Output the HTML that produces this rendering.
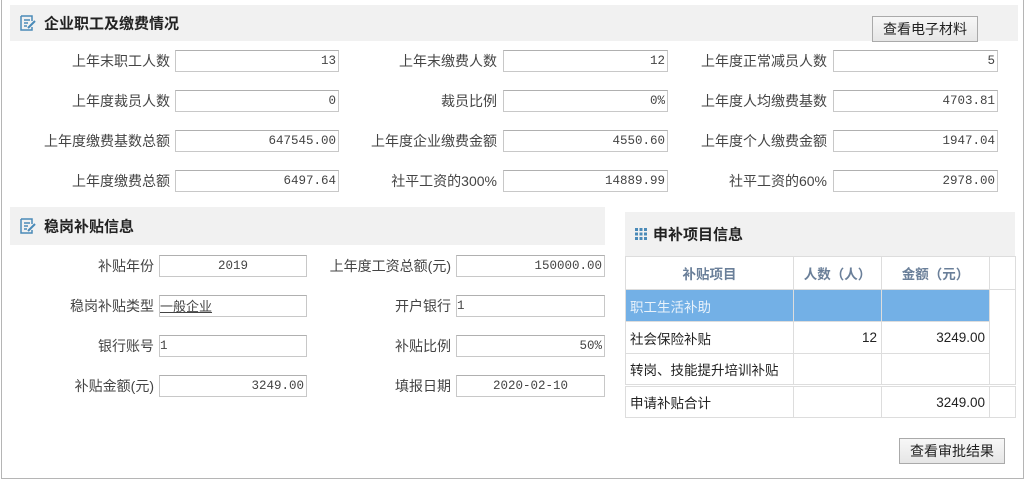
<!DOCTYPE html>
<html><head><meta charset="utf-8"><style>
*{box-sizing:border-box;margin:0;padding:0}
body{width:1026px;height:481px;background:#fff;position:relative;overflow:hidden;font-family:"Liberation Sans","Noto Sans CJK SC",sans-serif;color:#333}
.frame{position:absolute;left:1px;top:-2px;width:1023px;height:481px;border:1px solid #b5b5b5;}
.hd{position:absolute;background:#f1f1f1;font-weight:bold;font-size:15px;color:#222}
.hd span{position:absolute;left:34px;top:50%;transform:translateY(-50%)}
.ic{position:absolute;left:9px;top:50%;margin-top:-9px}
.lb{position:absolute;font-size:14px;color:#444;text-align:right;width:160px;line-height:22px}
.in{position:absolute;height:22px;border:1px solid #c8c8c8;border-top-color:#b0b0b0;background:#fff;font-family:"Liberation Mono","Noto Sans CJK SC",monospace;font-size:12.5px;line-height:20px;padding:0 2px;color:#444}
.r{text-align:right}.c{text-align:center}
.btn{position:absolute;border:1px solid #aaa;background:linear-gradient(#f7f7f7,#e6e6e6);font-size:14px;color:#222;text-align:center;line-height:24px}
table{position:absolute;left:625px;top:256px;border-collapse:collapse;font-size:13.5px}
td{border:1px solid #ddd;height:32px;padding:0 4px;color:#222}
th{border:1px solid #ddd;height:33px;color:#6a7f99;font-weight:bold;font-size:13.5px}
</style></head><body>
<div class="frame"></div>
<div class="hd" style="left:10px;top:5px;width:1008px;height:36px">
<svg class="ic" width="18" height="18" viewBox="0 0 18 18"><path d="M2 2h11v5M2 2v14h11v-3M5 6h6M5 9h4M5 12h3" fill="none" stroke="#4a8ab8" stroke-width="1.5"/><path d="M9 14l7-7" stroke="#4a8ab8" stroke-width="2"/></svg>
<span>企业职工及缴费情况</span></div>
<div class="btn" style="left:872px;top:16px;width:106px;height:26px">查看电子材料</div>

<div class="lb" style="left:10px;top:50px">上年末职工人数</div><div class="in r" style="left:175px;top:50px;width:164px">13</div>
<div class="lb" style="left:337px;top:50px">上年末缴费人数</div><div class="in r" style="left:503px;top:50px;width:165px">12</div>
<div class="lb" style="left:667px;top:50px">上年度正常减员人数</div><div class="in r" style="left:833px;top:50px;width:165px">5</div>

<div class="lb" style="left:10px;top:90px">上年度裁员人数</div><div class="in r" style="left:175px;top:90px;width:164px">0</div>
<div class="lb" style="left:337px;top:90px">裁员比例</div><div class="in r" style="left:503px;top:90px;width:165px">0%</div>
<div class="lb" style="left:667px;top:90px">上年度人均缴费基数</div><div class="in r" style="left:833px;top:90px;width:165px">4703.81</div>

<div class="lb" style="left:10px;top:130px">上年度缴费基数总额</div><div class="in r" style="left:175px;top:130px;width:164px">647545.00</div>
<div class="lb" style="left:337px;top:130px">上年度企业缴费金额</div><div class="in r" style="left:503px;top:130px;width:165px">4550.60</div>
<div class="lb" style="left:667px;top:130px">上年度个人缴费金额</div><div class="in r" style="left:833px;top:130px;width:165px">1947.04</div>

<div class="lb" style="left:10px;top:170px">上年度缴费总额</div><div class="in r" style="left:175px;top:170px;width:164px">6497.64</div>
<div class="lb" style="left:337px;top:170px">社平工资的300%</div><div class="in r" style="left:503px;top:170px;width:165px">14889.99</div>
<div class="lb" style="left:667px;top:170px">社平工资的60%</div><div class="in r" style="left:833px;top:170px;width:165px">2978.00</div>

<div class="hd" style="left:10px;top:207px;width:595px;height:38px">
<svg class="ic" width="18" height="18" viewBox="0 0 18 18"><path d="M2 2h11v5M2 2v14h11v-3M5 6h6M5 9h4M5 12h3" fill="none" stroke="#4a8ab8" stroke-width="1.5"/><path d="M9 14l7-7" stroke="#4a8ab8" stroke-width="2"/></svg>
<span>稳岗补贴信息</span></div>

<div class="lb" style="left:-6px;top:255px">补贴年份</div><div class="in c" style="left:159px;top:255px;width:148px">2019</div>
<div class="lb" style="left:291px;top:255px">上年度工资总额(元)</div><div class="in r" style="left:456px;top:255px;width:149px">150000.00</div>
<div class="lb" style="left:-6px;top:295px">稳岗补贴类型</div><div class="in" style="left:159px;top:295px;width:148px;font-family:'Noto Sans CJK SC',sans-serif;font-size:13px;padding:0"><u>一般企业</u></div>
<div class="lb" style="left:291px;top:295px">开户银行</div><div class="in" style="left:456px;top:295px;width:149px;padding:0">1</div>
<div class="lb" style="left:-6px;top:335px">银行账号</div><div class="in" style="left:159px;top:335px;width:148px;padding:0">1</div>
<div class="lb" style="left:291px;top:335px">补贴比例</div><div class="in r" style="left:456px;top:335px;width:149px">50%</div>
<div class="lb" style="left:-6px;top:375px">补贴金额(元)</div><div class="in r" style="left:159px;top:375px;width:148px">3249.00</div>
<div class="lb" style="left:291px;top:375px">填报日期</div><div class="in c" style="left:456px;top:375px;width:149px">2020-02-10</div>

<div class="hd" style="left:625px;top:212px;width:390px;height:44px">
<svg class="ic" width="14" height="14" viewBox="0 0 14 14" style="margin-top:-7px"><g fill="#4a8ab8"><rect x="1" y="1" width="3" height="3"/><rect x="5.5" y="1" width="3" height="3"/><rect x="10" y="1" width="3" height="3"/><rect x="1" y="5.5" width="3" height="3"/><rect x="5.5" y="5.5" width="3" height="3"/><rect x="10" y="5.5" width="3" height="3"/><rect x="1" y="10" width="3" height="3"/><rect x="5.5" y="10" width="3" height="3"/><rect x="10" y="10" width="3" height="3"/></g></svg>
<span style="left:28px">申补项目信息</span></div>
<table>
<tr><th style="width:168px">补贴项目</th><th style="width:88px">人数（人）</th><th style="width:108px">金额（元）</th><th style="width:26px"></th></tr>
<tr style="background:#73b0e6"><td style="color:#e8f2fb">职工生活补助</td><td></td><td></td><td style="background:#fff;border-top:none;border-bottom:none"></td></tr>
<tr><td>社会保险补贴</td><td class="r">12</td><td class="r">3249.00</td><td style="border-top:none;border-bottom:none"></td></tr>
<tr><td>转岗、技能提升培训补贴</td><td></td><td></td><td style="border-top:none"></td></tr>
<tr><td style="border-top:3px double #ddd">申请补贴合计</td><td style="border-top:3px double #ddd"></td><td class="r" style="border-top:3px double #ddd">3249.00</td><td style="border-top:3px double #ddd"></td></tr>
</table>
<div class="btn" style="left:899px;top:438px;width:106px;height:26px">查看审批结果</div>
</body></html>
